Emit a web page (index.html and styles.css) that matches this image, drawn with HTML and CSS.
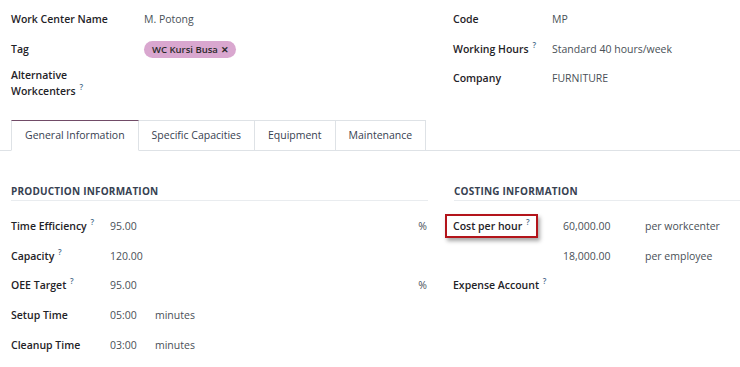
FILE: index.html
```html
<!DOCTYPE html>
<html lang="en">
<head>
    <meta charset="UTF-8">
    <meta name="viewport" content="width=device-width, initial-scale=1.0">
    <title>Work Center</title>
    <link rel="stylesheet" href="styles.css">
</head>
<body>

<div class="top">
    <div class="group left">
        <div class="field">
            <div class="label">Work Center Name</div>
            <div class="value">M. Potong</div>
        </div>
        <div class="field">
            <div class="label">Tag</div>
            <div class="value"><span class="tag">WC Kursi Busa <span class="tag-x">✕</span></span></div>
        </div>
        <div class="field tall">
            <div class="label">Alternative<br>Workcenters <sup>?</sup></div>
            <div class="value"></div>
        </div>
    </div>
    <div class="group right">
        <div class="field">
            <div class="label">Code</div>
            <div class="value">MP</div>
        </div>
        <div class="field">
            <div class="label">Working Hours <sup>?</sup></div>
            <div class="value">Standard 40 hours/week</div>
        </div>
        <div class="field">
            <div class="label">Company</div>
            <div class="value">FURNITURE</div>
        </div>
    </div>
</div>

<div class="tabs">
    <div class="tab active">General Information</div>
    <div class="tab">Specific Capacities</div>
    <div class="tab">Equipment</div>
    <div class="tab">Maintenance</div>
</div>

<div class="sections">
    <div class="section production">
        <div class="section-title">Production Information</div>
        <div class="row">
            <div class="label">Time Efficiency <sup>?</sup></div>
            <div class="value grow">95.00</div>
            <div class="unit">%</div>
        </div>
        <div class="row">
            <div class="label">Capacity <sup>?</sup></div>
            <div class="value grow">120.00</div>
        </div>
        <div class="row">
            <div class="label">OEE Target <sup>?</sup></div>
            <div class="value grow">95.00</div>
            <div class="unit">%</div>
        </div>
        <div class="row">
            <div class="label">Setup Time</div>
            <div class="value time">05:00</div>
            <div class="value">minutes</div>
        </div>
        <div class="row">
            <div class="label">Cleanup Time</div>
            <div class="value time">03:00</div>
            <div class="value">minutes</div>
        </div>
    </div>

    <div class="section costing">
        <div class="section-title">Costing Information</div>
        <div class="row">
            <div class="label"><span class="highlight">Cost per hour <sup>?</sup></span></div>
            <div class="value amount">60,000.00</div>
            <div class="value">per workcenter</div>
        </div>
        <div class="row">
            <div class="label"></div>
            <div class="value amount">18,000.00</div>
            <div class="value">per employee</div>
        </div>
        <div class="row">
            <div class="label">Expense Account <sup>?</sup></div>
        </div>
    </div>
</div>

</body>
</html>
```

FILE: styles.css
```css
body {
    margin: 0;
    font-family: "Open Sans", "Noto Sans", sans-serif;
    font-size: 10.5px;
    color: #212529;
    background-color: white;
}
sup {
    font-size: 8px;
    color: #4a6b8a;
    vertical-align: 5px;
    line-height: 0;
    margin-left: 1px;
}
.label {
    font-weight: 600;
    color: #1f2328;
}
.value {
    color: #495057;
}

/* header fields */
.top {
    display: grid;
    grid-template-columns: 442px 1fr;
    padding: 4px 0 0 11px;
}
.field {
    display: flex;
    align-items: center;
    height: 30px;
}
.field.tall {
    height: auto;
    align-items: flex-start;
    padding: 3px 0 4px;
    line-height: 16px;
}
.right .field:last-child {
    height: 28px;
}
.left .label {
    width: 133px;
}
.right .label {
    width: 99px;
}
.tag {
    display: inline-block;
    background-color: #d9a7cf;
    color: #2b2b2b;
    font-weight: 600;
    font-size: 9.5px;
    line-height: 17px;
    padding: 0 7px 0 8px;
    border-radius: 9px;
}
.tag-x {
    margin-left: 1px;
    font-size: 9px;
}

/* tabs */
.tabs {
    display: flex;
    margin-top: 17px;
    padding-left: 11px;
    border-bottom: 1px solid #dee2e6;
}
.tab {
    height: 29px;
    line-height: 29px;
    padding: 0 13px;
    border: 1px solid #dee2e6;
    border-left: none;
    margin-bottom: -1px;
    color: #374151;
}
.tab:first-child {
    border-left: 1px solid #dee2e6;
}
.tab.active {
    border-top: 1px solid #714b67;
    border-bottom: 1px solid white;
    background-color: white;
}

/* sections */
.sections {
    display: grid;
    grid-template-columns: 417px 288px;
    column-gap: 25px;
    padding-left: 11px;
    margin-top: 32px;
}
.section-title {
    font-weight: 700;
    font-size: 10px;
    text-transform: uppercase;
    letter-spacing: 0.2px;
    color: #374151;
    line-height: 16px;
    padding-bottom: 1px;
    border-bottom: 1px solid #e9ecef;
    margin-bottom: 10px;
}
.row {
    display: flex;
    align-items: center;
    height: 29.8px;
}
.production .label {
    width: 99px;
}
.value.grow {
    flex: 1;
}
.value.time {
    width: 45px;
}
.unit {
    color: #495057;
    padding-right: 1px;
}
.costing .section-title {
    margin-left: 1px;
}
.costing .label {
    width: 110px;
}
.value.amount {
    width: 82px;
}
.highlight {
    display: inline-block;
    border: 2px solid #b3141b;
    padding: 3px 6px;
    margin-left: -8px;
    box-shadow: 2px 3px 4px rgba(0, 0, 0, 0.35);
}
```
